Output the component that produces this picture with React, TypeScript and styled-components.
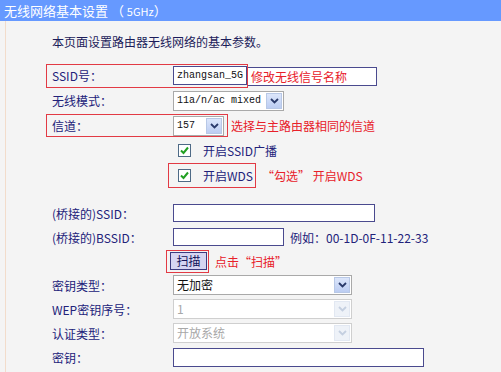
import * as React from "react";
import styled, { createGlobalStyle } from "styled-components";

const Global = createGlobalStyle`
  body {
    margin: 0;
    background: #f4f4f4;
    font-family: "Noto Sans CJK SC", "Liberation Sans", sans-serif;
  }
`;

const Page = styled.div`
  width: 501px;
  height: 372px;
  overflow: hidden;
  background: #f4f4f4;
`;

const Header = styled.div`
  height: 21px;
  line-height: 21px;
  background: #6699ff;
  color: #ffffff;
  font-size: 13px;
  padding-left: 4px;
  white-space: nowrap;
`;

const Small = styled.span`
  font-size: 11px;
`;

const Body = styled.div`
  margin-left: 5px;
  border-left: 1px solid #f2dccb;
  height: 351px;
  background: #f4f4f4;
`;

const Intro = styled.div`
  height: 42px;
  line-height: 42px;
  padding-left: 46px;
  font-size: 12px;
  color: #1c1c5a;
`;

const Row = styled.div<{ $h?: number; $gap?: number }>`
  display: flex;
  align-items: center;
  height: ${(p) => p.$h ?? 24}px;
  margin-top: ${(p) => p.$gap ?? 0}px;
  padding-left: 46px;
  font-size: 12px;
  color: #22227a;
  white-space: nowrap;
`;

const Marked = styled.div<{ $h?: number; $pl?: number; $pr?: number; $ml?: number }>`
  display: flex;
  align-items: center;
  box-sizing: border-box;
  height: ${(p) => p.$h ?? 23}px;
  border: 1px solid #e23a44;
  margin-left: ${(p) => p.$ml ?? -((p.$pl ?? 5) + 1)}px;
  padding-left: ${(p) => p.$pl ?? 5}px;
  padding-right: ${(p) => p.$pr ?? 0}px;
`;

const Label = styled.span`
  display: inline-block;
  width: 121px;
  flex-shrink: 0;
`;

const Spacer = styled.span<{ $w: number }>`
  display: inline-block;
  width: ${(p) => p.$w}px;
  flex-shrink: 0;
`;

const Input = styled.div<{ $w: number; $h?: number }>`
  box-sizing: border-box;
  width: ${(p) => p.$w}px;
  height: ${(p) => p.$h ?? 19}px;
  border: 1px solid #4a4a8e;
  background: #ffffff;
  font-family: "Liberation Mono", "DejaVu Sans Mono", monospace;
  font-size: 10px;
  color: #111;
  line-height: 17px;
  padding-left: 3px;
  flex-shrink: 0;
  overflow: hidden;
`;

const HintBox = styled.div`
  box-sizing: border-box;
  width: 129px;
  height: 19px;
  border: 1px solid #4a4a8e;
  border-left: none;
  background: #ffffff;
  color: #e8202a;
  font-size: 12px;
  line-height: 17px;
  padding-left: 3px;
  margin-top: 2px;
`;

const Select = styled.div<{ $w: number; $disabled?: boolean }>`
  box-sizing: border-box;
  display: flex;
  width: ${(p) => p.$w}px;
  height: 20px;
  border: 1px solid ${(p) => (p.$disabled ? "#cfcfcf" : "#a9a9a9")};
  background: #ffffff;
  flex-shrink: 0;
`;

const SelectText = styled.span<{ $disabled?: boolean; $mono?: boolean }>`
  flex: 1;
  padding-left: 3px;
  line-height: 18px;
  font-size: ${(p) => (p.$mono ? 10 : 12)}px;
  color: ${(p) => (p.$disabled ? "#a8a8a8" : "#111")};
  font-family: ${(p) =>
    p.$mono
      ? `"Liberation Mono", "DejaVu Sans Mono", monospace`
      : `"Noto Sans CJK SC", sans-serif`};
  overflow: hidden;
`;

const DropBtn = styled.span<{ $disabled?: boolean }>`
  width: 16px;
  height: 16px;
  margin: 1px;
  box-sizing: border-box;
  display: flex;
  align-items: center;
  justify-content: center;
  border: 1px solid ${(p) => (p.$disabled ? "#e2e8f2" : "#b8c8e6")};
  background: ${(p) =>
    p.$disabled ? "#eef2f8" : "linear-gradient(#dce6fb, #bccdf2)"};
`;

const Hint = styled.span<{ $ml?: number }>`
  color: #e8202a;
  margin-left: ${(p) => p.$ml ?? 6}px;
  font-size: 12px;
`;

const Plain = styled.span<{ $ml?: number }>`
  margin-left: ${(p) => p.$ml ?? 6}px;
  color: #22227a;
`;

const Check = styled.span`
  box-sizing: border-box;
  width: 13px;
  height: 13px;
  border: 1px solid #4e6a86;
  background: #ffffff;
  display: inline-flex;
  align-items: center;
  justify-content: center;
  flex-shrink: 0;
`;

const CheckText = styled.span`
  margin-left: 12px;
  color: #22227a;
`;

const ScanButton = styled.div`
  box-sizing: border-box;
  width: 37px;
  height: 18px;
  border: 1px solid #3c3c80;
  background: #d6d6f2;
  color: #14145a;
  font-size: 12px;
  line-height: 16px;
  text-align: center;
`;

const Arrow: React.FC<{ disabled?: boolean }> = ({ disabled }) => (
  <svg width="9" height="6" viewBox="0 0 9 6">
    <path
      d="M1 1 L4.5 4.5 L8 1"
      fill="none"
      stroke={disabled ? "#c4cfe0" : "#2a3a6a"}
      strokeWidth="1.8"
    />
  </svg>
);

const Tick = () => (
  <svg width="9" height="9" viewBox="0 0 9 9">
    <path d="M1 4.5 L3.5 7 L8 1.5" fill="none" stroke="#22a022" strokeWidth="2" />
  </svg>
);

const Dropdown: React.FC<{
  w: number;
  value: string;
  disabled?: boolean;
  mono?: boolean;
}> = ({ w, value, disabled, mono }) => (
  <Select $w={w} $disabled={disabled}>
    <SelectText $disabled={disabled} $mono={mono}>
      {value}
    </SelectText>
    <DropBtn $disabled={disabled}>
      <Arrow disabled={disabled} />
    </DropBtn>
  </Select>
);

const App: React.FC = () => {
  return (
    <Page>
      <Global />
      <Header>
        无线网络基本设置 （ <Small>5GHz</Small>）
      </Header>
      <Body>
        <Intro>本页面设置路由器无线网络的基本参数。</Intro>

        <Row $h={25}>
          <Marked $h={24}>
            <Label>SSID号：</Label>
            <Input $w={74}>zhangsan_5G</Input>
          </Marked>
          <HintBox>修改无线信号名称</HintBox>
        </Row>

        <Row $h={25}>
          <Label>无线模式：</Label>
          <Dropdown w={111} value="11a/n/ac mixed" mono />
        </Row>

        <Row $h={25}>
          <Marked $pr={3}>
            <Label>信道：</Label>
            <Dropdown w={51} value="157" mono />
          </Marked>
          <Hint $ml={3}>选择与主路由器相同的信道</Hint>
        </Row>

        <Row $h={25}>
          <Label />
          <Spacer $w={5} />
          <Check>
            <Tick />
          </Check>
          <CheckText>开启SSID广播</CheckText>
        </Row>

        <Row $h={25}>
          <Label />
          <Marked $h={25} $pl={9} $pr={2} $ml={-5}>
            <Check>
              <Tick />
            </Check>
            <CheckText>开启WDS</CheckText>
          </Marked>
          <Hint $ml={6}>“勾选” 开启WDS</Hint>
        </Row>

        <Row $gap={13}>
          <Label>(桥接的)SSID：</Label>
          <Input $w={202} $h={18} />
        </Row>

        <Row>
          <Label>(桥接的)BSSID：</Label>
          <Input $w={111} $h={18} />
          <Plain>例如：00-1D-0F-11-22-33</Plain>
        </Row>

        <Row>
          <Label />
          <Marked $pl={3} $pr={1} $ml={-7}>
            <ScanButton>扫描</ScanButton>
          </Marked>
          <Hint $ml={6}>点击“扫描”</Hint>
        </Row>

        <Row>
          <Label>密钥类型：</Label>
          <Dropdown w={179} value="无加密" />
        </Row>

        <Row>
          <Label>WEP密钥序号：</Label>
          <Dropdown w={179} value="1" disabled />
        </Row>

        <Row>
          <Label>认证类型：</Label>
          <Dropdown w={179} value="开放系统" disabled />
        </Row>

        <Row>
          <Label>密钥：</Label>
          <Input $w={251} $h={19} />
        </Row>
      </Body>
    </Page>
  );
};

export default App;
